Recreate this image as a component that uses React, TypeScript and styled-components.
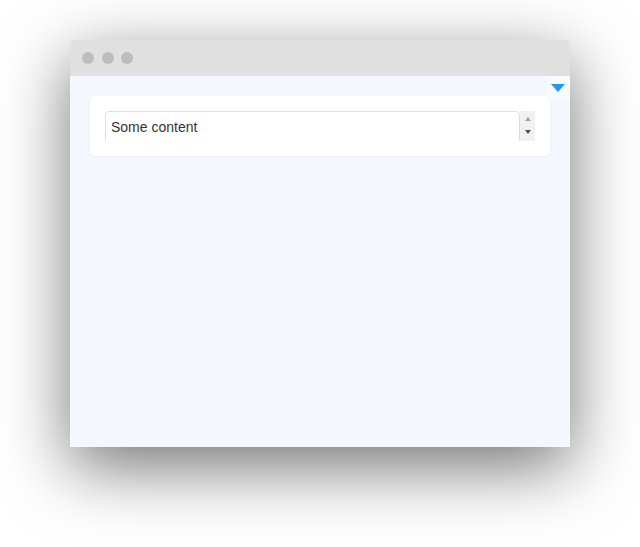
import React from "react";
import styled, { createGlobalStyle } from "styled-components";

const Global = createGlobalStyle`
  html, body { margin: 0; padding: 0; background: #ffffff; }
  body { font-family: "Liberation Sans", Arial, sans-serif; }
`;

const Stage = styled.div`
  padding: 40px 70px 100px;
`;

const Window = styled.div`
  width: 500px;
  height: 407px;
  display: flex;
  flex-direction: column;
  border-radius: 4px 4px 0 0;
  box-shadow: 0 20px 68px rgba(0, 0, 0, 0.55);
  background: #f4f7fe;
`;

const TitleBar = styled.div`
  height: 36px;
  flex: none;
  display: flex;
  align-items: center;
  gap: 7.5px;
  padding-left: 12px;
  background: #e0e0e0;
  border-radius: 4px 4px 0 0;
`;

const Dot = styled.span`
  width: 12px;
  height: 12px;
  border-radius: 50%;
  background: #bdbdbd;
`;

const Content = styled.div`
  position: relative;
  flex: 1;
  padding: 20px;
`;

const Toggle = styled.button`
  position: absolute;
  top: 0;
  right: 0;
  width: 24px;
  height: 24px;
  border: none;
  padding: 0;
  display: flex;
  align-items: center;
  justify-content: center;
  background: #f8faff;
`;

const Triangle = styled.span`
  width: 0;
  height: 0;
  border-left: 7px solid transparent;
  border-right: 7px solid transparent;
  border-top: 8px solid #2196f3;
`;

const Card = styled.div`
  background: #ffffff;
  border-radius: 5px;
  padding: 15px;
  box-shadow: 0 1px 3px rgba(0, 0, 0, 0.04);
`;

const Scroller = styled.div`
  height: 30px;
  display: flex;
  overflow: hidden;
`;

const Area = styled.textarea`
  display: block;
  flex: 1;
  min-width: 0;
  box-sizing: border-box;
  height: 60px;
  margin: 0;
  padding: 7px 5px;
  border: 1px solid #dddddd;
  border-radius: 4px;
  resize: none;
  outline: none;
  overflow: hidden;
  font-family: "Liberation Sans", Arial, sans-serif;
  font-size: 14px;
  color: #333333;
  background: #ffffff;
`;

const ScrollBar = styled.div`
  width: 15px;
  flex: none;
  display: flex;
  flex-direction: column;
  justify-content: space-between;
  align-items: center;
  background: #f1f1f1;
  padding: 6px 0 7px;
  box-sizing: border-box;
`;

const Arrow = styled.span<{ $dir: "up" | "down"; $color: string }>`
  width: 0;
  height: 0;
  border-left: 3.5px solid transparent;
  border-right: 3.5px solid transparent;
  ${(p) =>
    p.$dir === "up"
      ? `border-bottom: 4px solid ${p.$color};`
      : `border-top: 4px solid ${p.$color};`}
`;

export default function App() {
  return (
    <>
      <Global />
      <Stage>
        <Window>
          <TitleBar>
            <Dot />
            <Dot />
            <Dot />
          </TitleBar>
          <Content>
            <Toggle aria-label="toggle">
              <Triangle />
            </Toggle>
            <Card>
              <Scroller>
                <Area defaultValue="Some content" />
                <ScrollBar>
                  <Arrow $dir="up" $color="#a3a3a3" />
                  <Arrow $dir="down" $color="#505050" />
                </ScrollBar>
              </Scroller>
            </Card>
          </Content>
        </Window>
      </Stage>
    </>
  );
}
